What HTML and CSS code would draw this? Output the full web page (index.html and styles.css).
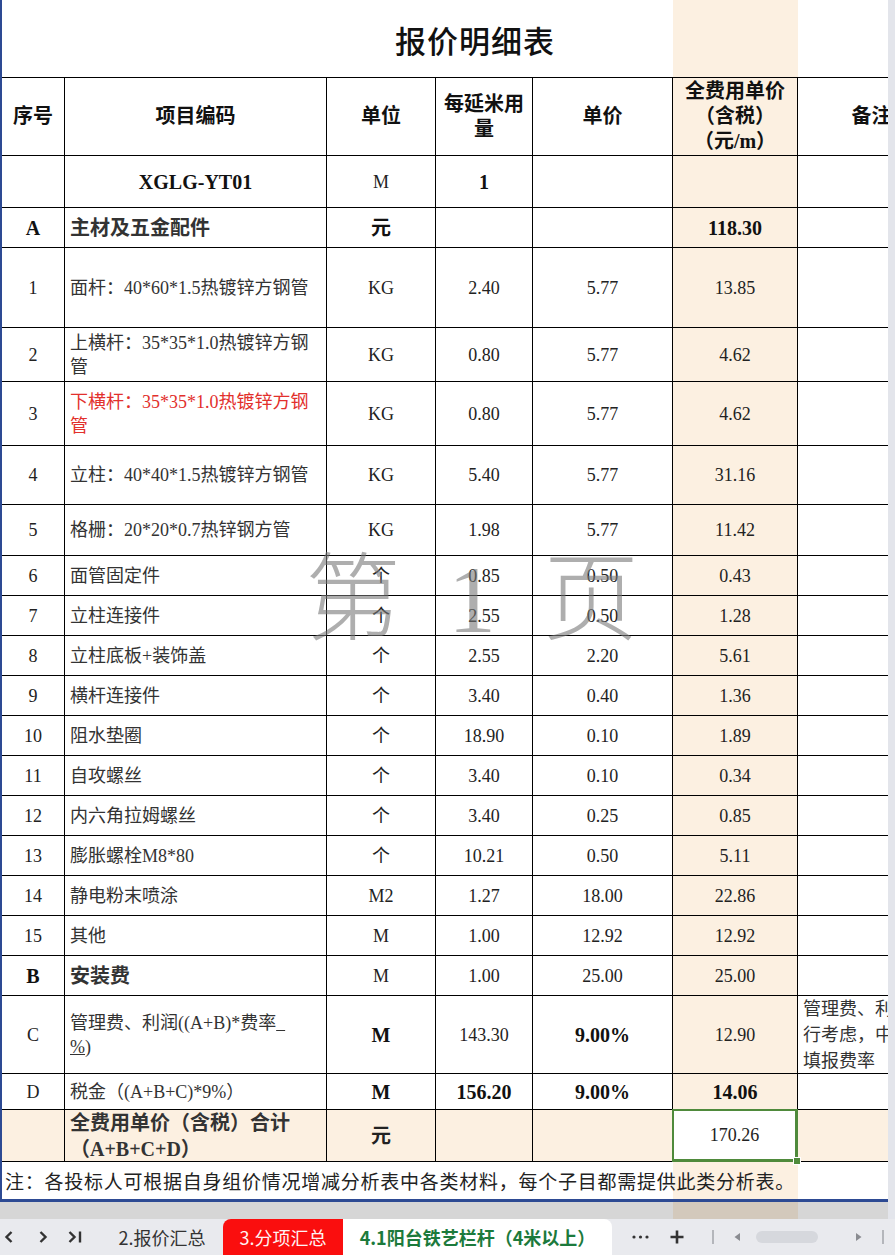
FILE: index.html
```html
<!DOCTYPE html>
<html lang="zh-CN">
<head>
<meta charset="utf-8">
<title>报价明细表</title>
<link rel="stylesheet" href="styles.css">
</head>
<body>
<div class="window">
  <div class="workspace">
    <div class="sheet">
      <div class="frame">
        <div class="title">报价明细表</div>
        <div class="grid">
          <div class="c h">序号</div>
          <div class="c h">项目编码</div>
          <div class="c h">单位</div>
          <div class="c h">每延米用量</div>
          <div class="c h">单价</div>
          <div class="c h">全费用单价（含税）（元/m）</div>
          <div class="c h">备注</div>

          <div class="c"></div>
          <div class="c b">XGLG-YT01</div>
          <div class="c">M</div>
          <div class="c b">1</div>
          <div class="c"></div>
          <div class="c"></div>
          <div class="c"></div>

          <div class="c b">A</div>
          <div class="c b d">主材及五金配件</div>
          <div class="c b">元</div>
          <div class="c"></div>
          <div class="c"></div>
          <div class="c b">118.30</div>
          <div class="c"></div>

          <div class="c">1</div>
          <div class="c d">面杆：40*60*1.5热镀锌方钢管</div>
          <div class="c">KG</div>
          <div class="c">2.40</div>
          <div class="c">5.77</div>
          <div class="c">13.85</div>
          <div class="c"></div>

          <div class="c">2</div>
          <div class="c d">上横杆：35*35*1.0热镀锌方钢管</div>
          <div class="c">KG</div>
          <div class="c">0.80</div>
          <div class="c">5.77</div>
          <div class="c">4.62</div>
          <div class="c"></div>

          <div class="c">3</div>
          <div class="c d red">下横杆：35*35*1.0热镀锌方钢管</div>
          <div class="c">KG</div>
          <div class="c">0.80</div>
          <div class="c">5.77</div>
          <div class="c">4.62</div>
          <div class="c"></div>

          <div class="c">4</div>
          <div class="c d">立柱：40*40*1.5热镀锌方钢管</div>
          <div class="c">KG</div>
          <div class="c">5.40</div>
          <div class="c">5.77</div>
          <div class="c">31.16</div>
          <div class="c"></div>

          <div class="c">5</div>
          <div class="c d">格栅：20*20*0.7热锌钢方管</div>
          <div class="c">KG</div>
          <div class="c">1.98</div>
          <div class="c">5.77</div>
          <div class="c">11.42</div>
          <div class="c"></div>

          <div class="c">6</div>
          <div class="c d">面管固定件</div>
          <div class="c">个</div>
          <div class="c">0.85</div>
          <div class="c">0.50</div>
          <div class="c">0.43</div>
          <div class="c"></div>

          <div class="c">7</div>
          <div class="c d">立柱连接件</div>
          <div class="c">个</div>
          <div class="c">2.55</div>
          <div class="c">0.50</div>
          <div class="c">1.28</div>
          <div class="c"></div>

          <div class="c">8</div>
          <div class="c d">立柱底板+装饰盖</div>
          <div class="c">个</div>
          <div class="c">2.55</div>
          <div class="c">2.20</div>
          <div class="c">5.61</div>
          <div class="c"></div>

          <div class="c">9</div>
          <div class="c d">横杆连接件</div>
          <div class="c">个</div>
          <div class="c">3.40</div>
          <div class="c">0.40</div>
          <div class="c">1.36</div>
          <div class="c"></div>

          <div class="c">10</div>
          <div class="c d">阻水垫圈</div>
          <div class="c">个</div>
          <div class="c">18.90</div>
          <div class="c">0.10</div>
          <div class="c">1.89</div>
          <div class="c"></div>

          <div class="c">11</div>
          <div class="c d">自攻螺丝</div>
          <div class="c">个</div>
          <div class="c">3.40</div>
          <div class="c">0.10</div>
          <div class="c">0.34</div>
          <div class="c"></div>

          <div class="c">12</div>
          <div class="c d">内六角拉姆螺丝</div>
          <div class="c">个</div>
          <div class="c">3.40</div>
          <div class="c">0.25</div>
          <div class="c">0.85</div>
          <div class="c"></div>

          <div class="c">13</div>
          <div class="c d">膨胀螺栓M8*80</div>
          <div class="c">个</div>
          <div class="c">10.21</div>
          <div class="c">0.50</div>
          <div class="c">5.11</div>
          <div class="c"></div>

          <div class="c">14</div>
          <div class="c d">静电粉末喷涂</div>
          <div class="c">M2</div>
          <div class="c">1.27</div>
          <div class="c">18.00</div>
          <div class="c">22.86</div>
          <div class="c"></div>

          <div class="c">15</div>
          <div class="c d">其他</div>
          <div class="c">M</div>
          <div class="c">1.00</div>
          <div class="c">12.92</div>
          <div class="c">12.92</div>
          <div class="c"></div>

          <div class="c b">B</div>
          <div class="c b d">安装费</div>
          <div class="c">M</div>
          <div class="c">1.00</div>
          <div class="c">25.00</div>
          <div class="c">25.00</div>
          <div class="c"></div>

          <div class="c">C</div>
          <div class="c d"><span>管理费、利润((A+B)*费率<u>&nbsp;&nbsp;</u><br><u>%</u>)</span></div>
          <div class="c b">M</div>
          <div class="c">143.30</div>
          <div class="c b">9.00%</div>
          <div class="c">12.90</div>
          <div class="c d remark"><span>管理费、利润由投标人自<br>行考虑，中标后不予调整<br>填报费率</span></div>

          <div class="c">D</div>
          <div class="c d">税金（(A+B+C)*9%）</div>
          <div class="c b">M</div>
          <div class="c b">156.20</div>
          <div class="c b">9.00%</div>
          <div class="c b">14.06</div>
          <div class="c"></div>

          <div class="c tot"></div>
          <div class="c tot d sb">全费用单价（含税）合计（A+B+C+D）</div>
          <div class="c tot sb">元</div>
          <div class="c tot"></div>
          <div class="c tot"></div>
          <div class="c sel">170.26</div>
          <div class="c tot"></div>
        </div>
        <div class="note">注：各投标人可根据自身组价情况增减分析表中各类材料，每个子目都需提供此类分析表。</div>
      </div>
      <div class="gap"></div>
      <div class="watermark"><span>第</span><span class="num">1</span><span>页</span></div>
    </div>
    <div class="vscroll"></div>
  </div>
  <div class="tabbar">
    <div class="nav">
      <svg class="ico" width="10" height="14" viewBox="0 0 10 14"><path d="M7.5 2 L2.5 7 L7.5 12"/></svg>
      <svg class="ico" width="10" height="14" viewBox="0 0 10 14"><path d="M2.5 2 L7.5 7 L2.5 12"/></svg>
      <svg class="ico" width="16" height="14" viewBox="0 0 16 14"><path d="M2.5 2 L7.5 7 L2.5 12"/><path d="M13 1.5 V12.5"/></svg>
    </div>
    <div class="tab">2.报价汇总</div>
    <div class="tab red">3.分项汇总</div>
    <div class="tab active">4.1阳台铁艺栏杆（4米以上）</div>
    <div class="tools">
      <svg class="more" width="17" height="4" viewBox="0 0 17 4"><circle cx="2" cy="2" r="1.6"/><circle cx="8.5" cy="2" r="1.6"/><circle cx="15" cy="2" r="1.6"/></svg>
      <svg class="plus" width="16" height="16" viewBox="0 0 16 16"><path d="M8 1.5 V14.5 M1.5 8 H14.5"/></svg>
      <span class="sep"></span>
      <svg class="tri" width="8" height="10" viewBox="0 0 8 10"><path d="M7 1 L1.5 5 L7 9 Z"/></svg>
      <span class="thumb"></span>
      <svg class="tri right" width="8" height="10" viewBox="0 0 8 10"><path d="M1 1 L6.5 5 L1 9 Z"/></svg>
      <span class="sep end"></span>
    </div>
  </div>
</div>
</body>
</html>
```

FILE: styles.css
```css
* {
  box-sizing: border-box;
  margin: 0;
  padding: 0;
}

html, body {
  width: 895px;
  height: 1255px;
  overflow: hidden;
  background: #ffffff;
}

body {
  font-family: "Liberation Serif", "Noto Sans CJK SC", serif;
  color: #1e1e1e;
}

.window {
  display: flex;
  flex-direction: column;
  height: 1255px;
}

.workspace {
  display: flex;
  height: 1219px;
}

.sheet {
  position: relative;
  width: 888px;
  height: 1219px;
  overflow: hidden;
  background: linear-gradient(to right,
    #ffffff 0, #ffffff 673px,
    #fcf0e1 673px, #fcf0e1 798px,
    #ffffff 798px);
}

.frame {
  border-left: 2px solid #2d4a93;
  border-bottom: 3px solid #2d4a93;
}

.title {
  height: 77px;
  display: flex;
  align-items: center;
  justify-content: center;
  padding-left: 60px;
  padding-top: 2px;
  font-family: "Noto Sans CJK SC", sans-serif;
  font-size: 31px;
  font-weight: 500;
  color: #111;
  letter-spacing: 1px;
}

.grid {
  display: grid;
  width: 944px;
  grid-template-columns: 63px 262px 109px 97px 140px 125px 148px;
  grid-template-rows: 78px 52px 40px 80px 54px 64px 59px 51px repeat(11, 40px) 78px 36px 52px;
  border-top: 1px solid #000;
}

.c {
  display: flex;
  align-items: center;
  justify-content: center;
  text-align: center;
  border-right: 1px solid #000;
  border-bottom: 1px solid #000;
  font-size: 18px;
  line-height: 24px;
  color: #222;
}

.h {
  font-size: 20px;
  font-weight: 700;
  line-height: 25px;
  padding: 0 4px;
  color: #111;
}

.b {
  font-size: 20px;
  font-weight: 700;
  color: #111;
}

.sb {
  font-size: 20px;
  font-weight: 700;
  line-height: 26px;
  color: #222;
}

.d {
  justify-content: flex-start;
  text-align: left;
  padding: 0 5px;
  color: #333;
}

.red {
  color: #e2302c;
}

.remark {
  white-space: nowrap;
  line-height: 26px;
  color: #333;
}

.tot {
  background: #fcf0e1;
}

.sel {
  position: relative;
  background: #ffffff;
  box-shadow: inset 0 0 0 2px #4f8a3b;
  margin: -1px 0 0 -1px;
  border-color: #4f8a3b;
  font-size: 18px;
}

.sel::after {
  content: "";
  position: absolute;
  right: -4px;
  bottom: -4px;
  width: 6px;
  height: 6px;
  background: #4f8a3b;
  border: 1px solid #ffffff;
}

.note {
  height: 37px;
  display: flex;
  align-items: center;
  padding-left: 3px;
  font-size: 19px;
  letter-spacing: 0.75px;
  color: #222;
  white-space: nowrap;
}

.gap {
  height: 17px;
  background: rgba(0, 0, 0, 0.16);
}

.watermark {
  position: absolute;
  left: 305px;
  top: 552px;
  display: flex;
  gap: 47px;
  font-family: "Liberation Serif", "Noto Sans CJK SC", serif;
  font-size: 96px;
  font-weight: 300;
  line-height: 1;
  color: rgba(120, 120, 120, 0.6);
  pointer-events: none;
}

.vscroll {
  width: 7px;
  background: #e3e5eb;
}

.tabbar {
  height: 36px;
  display: flex;
  align-items: stretch;
  background: #e9eaee;
  font-family: "Noto Sans CJK SC", sans-serif;
  font-size: 18px;
  color: #333;
}

.nav {
  width: 101px;
  display: flex;
  align-items: center;
  padding-left: 4px;
}

.ico {
  fill: none;
  stroke: #333;
  stroke-width: 2.4;
}

.ico + .ico {
  margin-left: 24px;
}

.ico:last-child {
  margin-left: 19px;
}

.tab {
  width: 122px;
  display: flex;
  align-items: center;
  justify-content: center;
  white-space: nowrap;
}

.tab.red {
  width: 120px;
  background: #fa0e0e;
  color: #fff3f3;
  border-radius: 8px 0 0 0;
}

.tab.active {
  width: 269px;
  background: #ffffff;
  color: #1c7a3c;
  font-weight: 700;
  border-radius: 0 8px 0 0;
}

.tools {
  display: flex;
  align-items: center;
  flex: 1;
}

.more {
  margin-left: 20px;
  fill: #333;
}

.plus {
  margin-left: 20px;
  fill: none;
  stroke: #333;
  stroke-width: 2.6;
}

.sep {
  width: 2px;
  height: 14px;
  background: #b4b6bb;
  margin-left: 27px;
}

.sep.end {
  margin-left: 19px;
}

.tri {
  margin-left: 19px;
  fill: #8a8c91;
}

.tri.right {
  margin-left: 37px;
}

.thumb {
  width: 62px;
  height: 12px;
  border-radius: 6px;
  background: #d6d8dd;
  margin-left: 15px;
}
```
